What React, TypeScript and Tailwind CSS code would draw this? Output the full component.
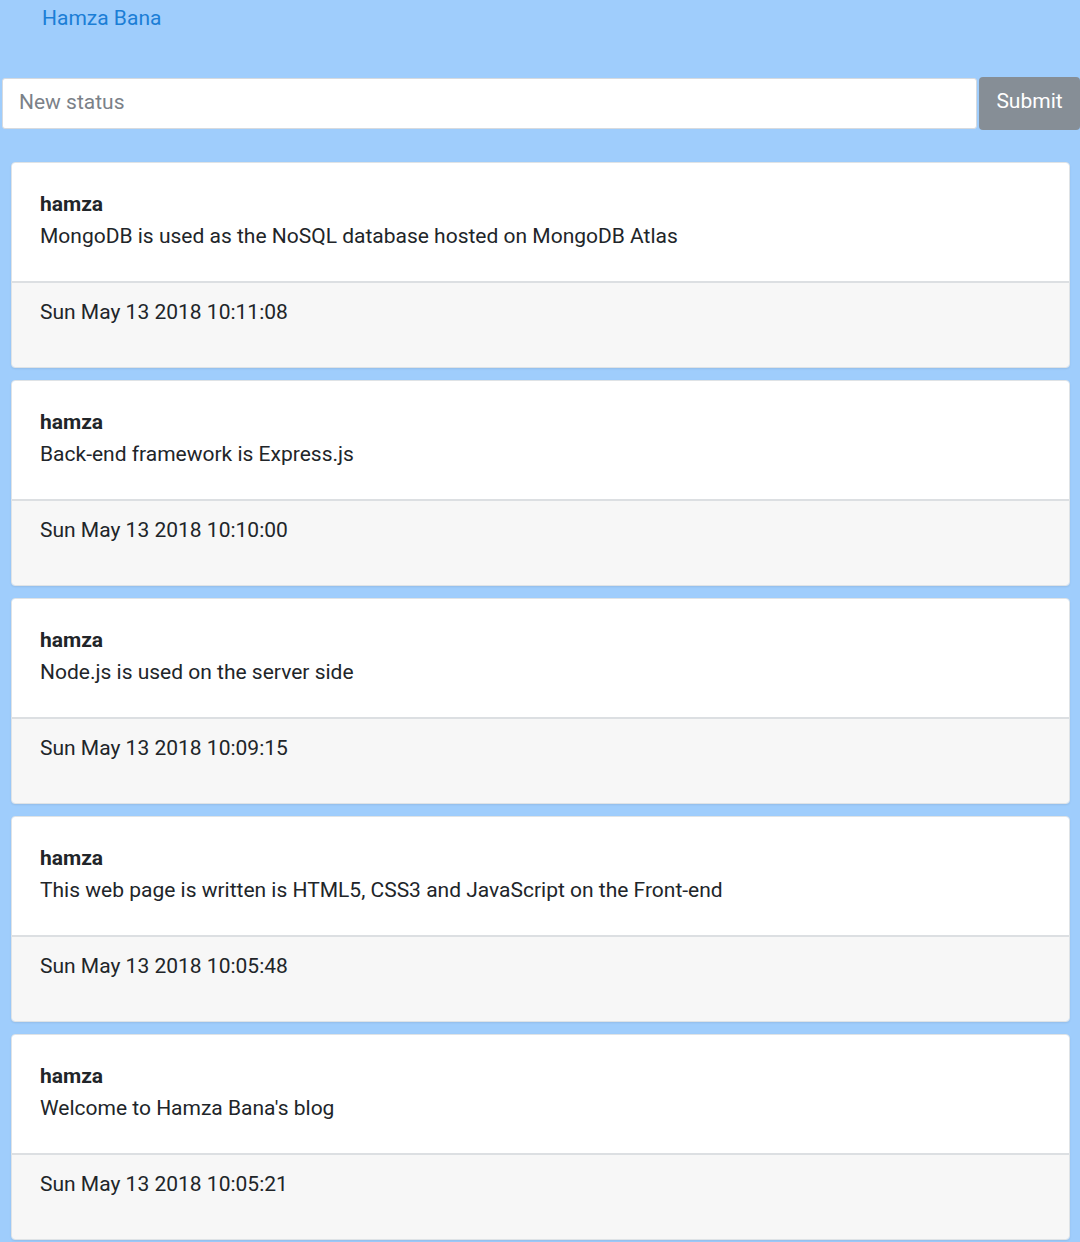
import React from "react";

const posts = [
  { user: "hamza", text: "MongoDB is used as the NoSQL database hosted on MongoDB Atlas", date: "Sun May 13 2018 10:11:08" },
  { user: "hamza", text: "Back-end framework is Express.js", date: "Sun May 13 2018 10:10:00" },
  { user: "hamza", text: "Node.js is used on the server side", date: "Sun May 13 2018 10:09:15" },
  { user: "hamza", text: "This web page is written is HTML5, CSS3 and JavaScript on the Front-end", date: "Sun May 13 2018 10:05:48" },
  { user: "hamza", text: "Welcome to Hamza Bana's blog", date: "Sun May 13 2018 10:05:21" },
];

export default function App() {
  return (
    <div className="min-h-screen bg-[#9fcdfc] font-['Roboto',sans-serif]">
      {/* Header */}
      <div className="h-[78px] pl-[42px] pt-[5px]">
        <a href="#" className="text-[21px] leading-[26px] text-[#1b7ed6]">Hamza Bana</a>
      </div>

      {/* New status form */}
      <div className="flex items-start pl-[2px]">
        <input
          placeholder="New status"
          className="h-[51px] flex-1 rounded-[3px] border border-[#d6dadf] bg-white px-[16px] pb-[4px] text-[21px] text-[#495057] placeholder:text-[#7b8188] outline-none"
        />
        <button className="ml-[2px] -mt-px h-[53px] w-[101px] rounded-[4px] bg-[#868e96] pb-[4px] text-[21px] text-white">
          Submit
        </button>
      </div>

      {/* Posts */}
      <div className="flex flex-col gap-[12px] pl-[11px] pr-[10px] pt-[32px]">
        {posts.map((p) => (
          <div key={p.date} className="overflow-hidden rounded-[4px] border border-[#dfe3e6] shadow-[0_1px_2px_rgba(0,0,0,0.08)]">
            <div className="h-[118px] bg-white px-[28px] pt-[25px] text-[21px] leading-[32px] text-[#212529]">
              <div className="font-bold">{p.user}</div>
              <div>{p.text}</div>
            </div>
            <div className="h-[86px] border-t-2 border-[#dcdfe2] bg-[#f7f7f7] px-[28px] pt-[13px] text-[21px] leading-[32px] text-[#212529]">
              {p.date}
            </div>
          </div>
        ))}
      </div>
    </div>
  );
}
